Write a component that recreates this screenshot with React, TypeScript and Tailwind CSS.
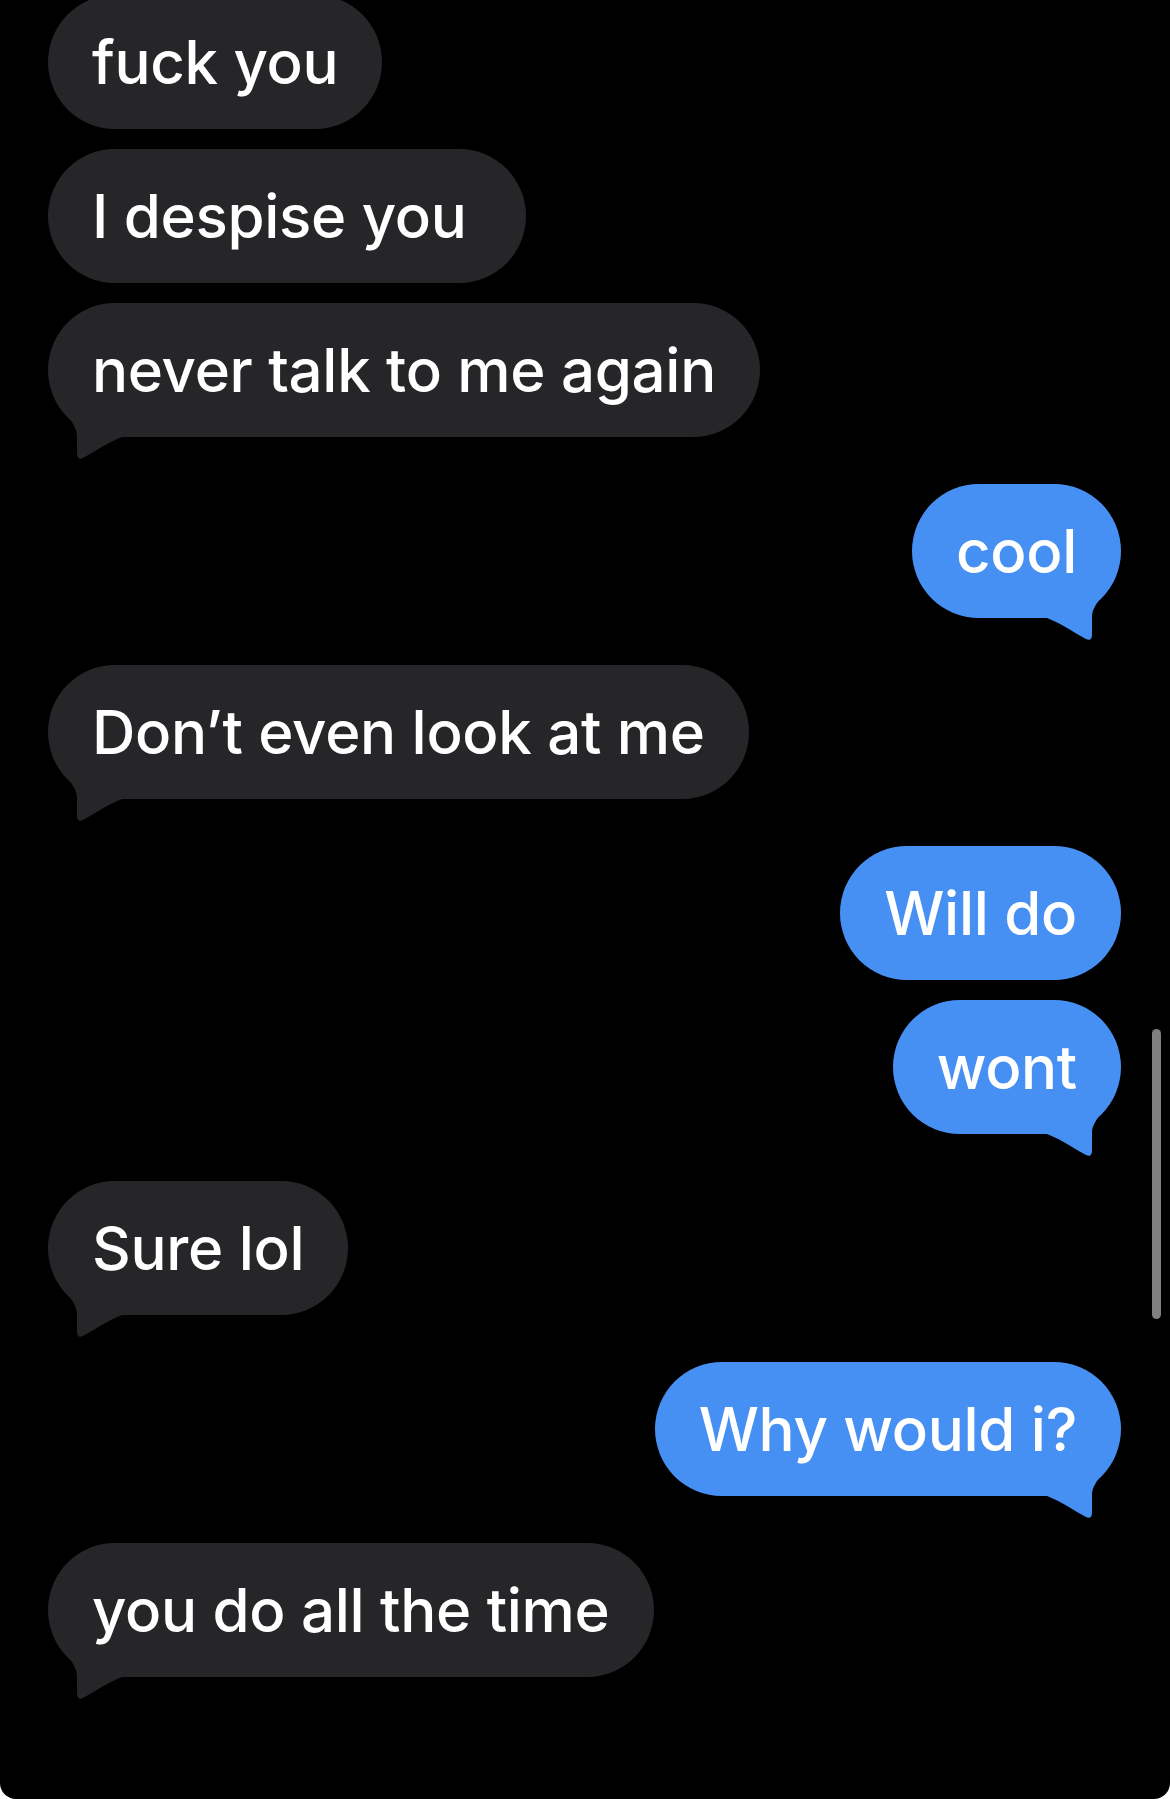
import React from 'react';

type Msg = { text: string; me: boolean; tail: boolean; gap: number };

const messages: Msg[] = [
  { text: 'fuck you', me: false, tail: false, gap: 0 },
  { text: 'I despise you ', me: false, tail: false, gap: 20 },
  { text: 'never talk to me again', me: false, tail: true, gap: 20 },
  { text: 'cool', me: true, tail: true, gap: 47 },
  { text: 'Don’t even look at me', me: false, tail: true, gap: 47 },
  { text: 'Will do', me: true, tail: false, gap: 47 },
  { text: 'wont', me: true, tail: true, gap: 20 },
  { text: 'Sure lol', me: false, tail: true, gap: 47 },
  { text: 'Why would i?', me: true, tail: true, gap: 47 },
  { text: 'you do all the time', me: false, tail: true, gap: 47 },
];

function Tail({ me }: { me: boolean }) {
  return (
    <svg
      className={`absolute bottom-[-25px] w-[80px] h-[65px] ${me ? 'right-0 -scale-x-100' : 'left-0'}`}
      viewBox="0 0 80 65"
      fill={me ? '#4790f3' : '#262629'}
    >
      <path d="M6 0 C12 14 28 24 29 38 L29 56 Q29 64 35 61 C47 55 58 46 74 40 L74 0 Z" />
    </svg>
  );
}

function Bubble({ msg }: { msg: Msg }) {
  const gapClass = msg.gap === 0 ? '-mt-[5px]' : msg.gap === 20 ? 'mt-[20px]' : 'mt-[47px]';
  return (
    <div className={`flex ${msg.me ? 'justify-end' : 'justify-start'} ${gapClass}`}>
      <div className="relative">
        {msg.tail && <Tail me={msg.me} />}
        <div
          className={`relative rounded-[67px] px-[44px] py-[27px] text-[60px] leading-[80px] font-medium text-white whitespace-pre tracking-[-0.3px] ${
            msg.me ? 'bg-[#4790f3]' : 'bg-[#262629]'
          }`}
        >
          {msg.text}
        </div>
      </div>
    </div>
  );
}

export default function App() {
  return (
    <div className="w-[1170px] h-[1799px] bg-white" style={{ fontFamily: 'Inter, "Noto Sans", sans-serif' }}>
      <div className="relative w-full h-full bg-black rounded-b-[16px] overflow-hidden">
        <div className="flex flex-col pl-[48px] pr-[49px]">
          {messages.map((m, i) => (
            <Bubble key={i} msg={m} />
          ))}
        </div>
        {/* scroll indicator */}
        <div className="absolute left-[1152px] top-[1029px] w-[9px] h-[290px] rounded-full bg-[#808080]" />
      </div>
    </div>
  );
}
